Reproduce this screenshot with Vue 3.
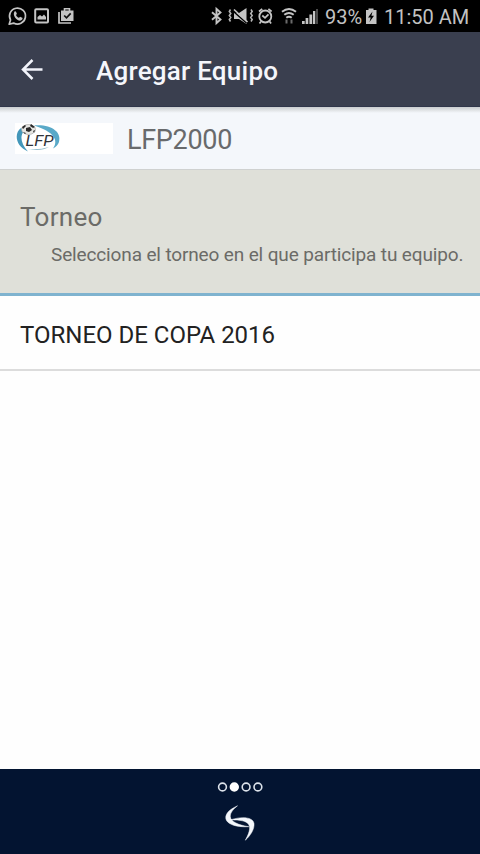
<script setup>
const team = 'LFP2000'
const tournaments = ['TORNEO DE COPA 2016']
const pages = [0, 1, 2, 3]
const activePage = 1
</script>

<template>
  <div class="screen">
    <div class="status">
      <svg class="notices" width="80" height="32" viewBox="0 0 80 32">
        <path d="M9.2 24.2 10.5 20A8 8 0 1 1 13.6 23.1Z" fill="none" stroke="#c4c4c4" stroke-width="1.7" stroke-linejoin="round" />
        <path d="M14.4 11.7c.7-.6 1.4-.4 1.7.3l.7 1.6c.2.5-.7 1.2-.7 1.6.6 1.3 1.5 2.1 2.8 2.6.5.1 1.1-1.2 1.6-.9l1.8.9c.8.5-.2 2.5-1.7 2.8-3.8.5-8.5-5.3-6.2-8.9z" fill="#c4c4c4" />
        <rect x="35.2" y="9.2" width="12.8" height="13.2" rx="1" fill="none" stroke="#c4c4c4" stroke-width="2" />
        <path d="M37.5 19.500v-2.500l2.500-2 2 1.500 2-2 2 2.500v2.500z" fill="#c4c4c4" />
        <path d="M59 12v11h12" fill="none" stroke="#c4c4c4" stroke-width="1.7" />
        <path d="M64.5 11V8.800h5V11" fill="none" stroke="#c4c4c4" stroke-width="1.6" />
        <path d="M61 10.500h12.500v10.500H61z" fill="#c4c4c4" />
        <path d="m64.2 15.500 2.300 2.300 4.200-4.400" fill="none" stroke="#111" stroke-width="1.7" />
      </svg>
      <svg class="signals" width="120" height="32" viewBox="205 0 120 32">
        <path d="m212 12.200 8.500 7.300-4 3.700V8.800l4 3.700-8.500 7.300" fill="none" stroke="#c4c4c4" stroke-width="1.9" />
        <path d="M230.500 9.500l-1.200 2 1.500 2-1.500 2 1.500 2-1.500 2 1.200 2M251 9.500l1.200 2-1.500 2 1.500 2-1.500 2 1.500 2-1.200 2" fill="none" stroke="#b5b5b5" stroke-width="1.5" />
        <path d="M234 13h5l7.500-5v16l-7.500-5h-5z" fill="#c4c4c4" />
        <path d="m233.500 11.500 13 11.500" stroke="#000" stroke-width="1.5" />
        <path d="m234 9.500 13.500 12.500" stroke="#c4c4c4" stroke-width="1.7" />
        <circle cx="265.3" cy="16.5" r="6" fill="none" stroke="#c4c4c4" stroke-width="1.8" />
        <path d="m259 11.500 3.200-2.700M271.600 11.500l-3.200-2.700M261 21.500l-1.500 2M269.600 21.500l1.500 2M262.300 15.500l2.700 2.300 3.500-3.500" fill="none" stroke="#c4c4c4" stroke-width="1.7" />
        <path d="M282 11.800q7-5.500 14 0M284.300 14.800q4.700-3.700 9.400 0M286.300 17.800q2.700-2 5.400 0" fill="none" stroke="#c4c4c4" stroke-width="2" />
        <path d="M286.500 19.500v4M291.500 19.500v4" fill="none" stroke="#6a6a6a" stroke-width="2" />
        <path d="M302 21h2.700v3H302zM305.600 18h2.700v6h-2.700zM309.400 14.500h2.800V24h-2.800z" fill="#c4c4c4" />
        <path d="M313 11h2.300v13H313z" fill="#c4c4c4" /><path d="M316 9h2v15h-2z" fill="#4b4b4b" />
      </svg>
      <span class="percent">93%</span>
      <svg class="battery" width="12" height="32" viewBox="0 0 12 32">
        <path d="M3.500 8.500h5V10H11.500v14H1V10h2.500z" fill="#c4c4c4" />
        <path d="M7.500 11.500 3 17.500h2.700L4.500 22 9 15.800H6.400z" fill="#000" />
      </svg>
      <span class="clock">11:50 AM</span>
    </div>

    <header class="toolbar">
      <svg class="back" width="24" height="24" viewBox="0 0 24 24">
        <path d="M22.500 12.500H3M12.500 3 3 12.500 12.500 22" fill="none" stroke="#f2f4fb" stroke-width="2.5" />
      </svg>
      <h1>Agregar Equipo</h1>
    </header>

    <div class="team">
      <div class="crest">
        <svg width="98" height="31" viewBox="0 0 98 31">
          <path d="M6 5C-1 10 0 23 13 28.500 6 21 4.500 13 9 8Z" fill="#4397ba" />
          <path d="M19 2.500C36 1 47 9 44 19c-1 3-3 5-6 6.500 6-8 1-17-19-23z" fill="#59a9c8" />
          <path d="M13 26q12 1 21-2-8 4.500-21 2z" fill="#8ab8c8" />
          <ellipse cx="13.500" cy="6.500" rx="7" ry="5" fill="#e5e5e2" stroke="#999" stroke-width=".6" />
          <path d="m11 5 4-1 2 3-3 2-3-1zM7 4l3-2 1 1-3 3zM16 1l4 3-2 1-3-2zM8 9l3 1-1 1zM18 8l2-1-1 3z" fill="#292929" />
          <text x="10.500" y="22.500" class="logo-text" textLength="28" lengthAdjust="spacingAndGlyphs">LFP</text>
        </svg>
      </div>
      <span>{{ team }}</span>
    </div>

    <section class="intro">
      <h2>Torneo</h2>
      <p>Selecciona el torneo en el que participa tu equipo.</p>
    </section>

    <main>
      <div v-for="item in tournaments" :key="item" class="option"><span>{{ item }}</span></div>
    </main>

    <footer>
      <svg class="pager" width="46" height="12" viewBox="0 0 46 12">
        <circle v-for="page in pages" :key="page" :cx="5.5 + page * 11.8" cy="6" r="3.9" :class="{ active: page === activePage }" />
      </svg>
      <svg class="brand" width="30" height="36" viewBox="0 0 30 36">
        <path d="M12.500.8C4.500 4.500.3 8.500.8 13.500c.7 5 9 9 23 8.200C13 20 5.500 16.500 5.300 11.500 5.200 7.500 8.500 4 12.500.8Z" fill="#f4f7fb" stroke="#f4f7fb" stroke-width=".5" />
        <path d="M20.300 35.200C26 30 29.500 24 29 18.500 28.300 12.200 17 10.800 4.500 15.200c10.500-.9 19 .9 20 6.300.6 4.300-1.700 9.200-4.200 13.700Z" fill="#f4f7fb" stroke="#f4f7fb" stroke-width=".5" />
      </svg>
    </footer>
  </div>
</template>

<style>
body { background: #fff; }
</style>

<style scoped>
.screen { width: 480px; height: 854px; display: flex; flex-direction: column; background: #fefefe; font-family: Roboto, sans-serif; overflow: hidden; }
.screen * { box-sizing: border-box; }
svg { display: block; flex: none; }
span, h1, h2, p { white-space: nowrap; }
.status { height: 32px; flex: none; display: flex; align-items: center; background: #000; color: #c2c2c2; font-size: 20px; line-height: 32px; }
.signals { margin-left: 125px; }
.percent { width: 40px; padding-top: 2px; }
.clock { margin-left: 7px; padding-top: 2px; }
.toolbar { height: 75px; flex: none; display: flex; align-items: center; padding-left: 20px; background: #3a3f4f; border-bottom: 1px solid #30364a; }
.toolbar h1 { margin: 3px 0 0 52px; color: #f5f6fb; font-size: 26px; line-height: 32px; font-weight: 500; letter-spacing: .24px; }
.team { height: 63px; flex: none; display: flex; align-items: center; padding-left: 15px; background: linear-gradient(#c9cccf, #dfe2e4 3px, #f4f7fb 6px); border-bottom: 1px solid #cfd1d0; color: #686a6c; font-size: 27px; letter-spacing: -.3px; }
.team span { padding-top: 3px; }
.crest { width: 98px; height: 31px; margin-right: 14px; background: #fff; }
.logo-text { font: italic 400 14px Roboto, sans-serif; fill: #30343a; letter-spacing: 0; }
.intro { height: 126px; flex: none; padding: 31px 0 0 20px; background: #dfe0d9; border-bottom: 3px solid #7fb3cf; color: #6b6b67; }
.intro h2 { margin: 0; font-size: 26px; line-height: 32px; font-weight: 400; letter-spacing: .3px; }
.intro p { margin: 10px 0 0 31px; font-size: 19px; line-height: 24px; letter-spacing: -.14px; }
main { flex: 1; }
.option { height: 75px; display: flex; align-items: center; padding: 4px 0 0 20px; border-bottom: 2px solid #dcdcdc; color: #222; font-size: 24px; }
footer { height: 85px; flex: none; display: flex; flex-direction: column; align-items: center; background: #031431; padding-top: 12px; }
.pager circle { fill: none; stroke: #dce2ea; stroke-width: 1.6px; }
.pager circle.active { fill: #fff; stroke: #fff; }
.brand { margin-top: 12px; }
</style>
